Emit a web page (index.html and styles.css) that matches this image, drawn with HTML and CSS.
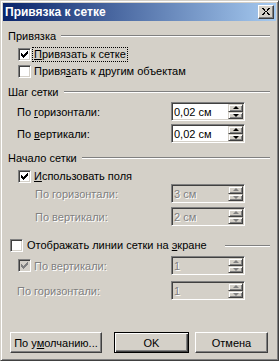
FILE: index.html
```html
<!DOCTYPE html>
<html lang="ru">

<head>
  <meta charset="UTF-8" />
  <title>Привязка к сетке</title>
  <link rel="stylesheet" href="styles.css">
</head>

<body>
  <div class="window">
    <div class="titlebar">
      <span class="title">Привязка к сетке</span>
      <div class="close">
        <svg width="8" height="7" viewBox="0 0 8 7" shape-rendering="crispEdges">
          <path d="M0 0h2v1h-2z M1 1h2v1h-2z M2 2h1v1h-1z M5 2h1v1h-1z M3 3h2v1h-2z M2 4h1v1h-1z M5 4h1v1h-1z M1 5h2v1h-2z M0 6h2v1h-2z M6 0h2v1h-2z M5 1h2v1h-2z M5 5h2v1h-2z M6 6h2v1h-2z" fill="#000" />
        </svg>
      </div>
    </div>

    <div class="content">
      <div class="group-head head-first"><span>Привязка</span><i class="rule"></i></div>

      <div class="check-row check-a indent">
        <span class="box">
          <svg class="tick" width="11" height="11" viewBox="0 0 11 11" shape-rendering="crispEdges"><path d="M2 4h1v3h-1z M3 5h1v3h-1z M4 6h1v3h-1z M5 5h1v3h-1z M6 4h1v3h-1z M7 3h1v3h-1z M8 2h1v3h-1z" /></svg>
        </span>
        <span class="focus"><u>П</u>ривязать к сетке</span>
      </div>
      <div class="check-row check-b indent">
        <span class="box"></span>
        <span class="text">Привя<u>з</u>ать к другим объектам</span>
      </div>

      <div class="group-head head-b"><span>Шаг сетки</span><i class="rule"></i></div>

      <div class="field-row row-a">
        <div class="field-label pad-small"><span>По <u>г</u>оризонтали:</span></div>
        <div class="spin-box">
          <span class="value">0,02 см</span>
          <div class="spinner">
            <div class="spin-up"><i class="arrow-up"></i></div>
            <div class="spin-down"><i class="arrow-down"></i></div>
          </div>
        </div>
      </div>
      <div class="field-row row-b">
        <div class="field-label pad-small"><span>По <u>в</u>ертикали:</span></div>
        <div class="spin-box">
          <span class="value">0,02 см</span>
          <div class="spinner">
            <div class="spin-up"><i class="arrow-up"></i></div>
            <div class="spin-down"><i class="arrow-down"></i></div>
          </div>
        </div>
      </div>

      <div class="group-head head-c"><span>Начало сетки</span><i class="rule"></i></div>

      <div class="check-row check-c indent">
        <span class="box">
          <svg class="tick" width="11" height="11" viewBox="0 0 11 11" shape-rendering="crispEdges"><path d="M2 4h1v3h-1z M3 5h1v3h-1z M4 6h1v3h-1z M5 5h1v3h-1z M6 4h1v3h-1z M7 3h1v3h-1z M8 2h1v3h-1z" /></svg>
        </span>
        <span class="text"><u>И</u>спользовать поля</span>
      </div>

      <div class="field-row row-c disabled">
        <div class="field-label pad-big"><span>По горизонтали:</span></div>
        <div class="spin-box">
          <span class="value">3 см</span>
          <div class="spinner">
            <div class="spin-up"><i class="arrow-up"></i></div>
            <div class="spin-down"><i class="arrow-down"></i></div>
          </div>
        </div>
      </div>
      <div class="field-row row-d disabled">
        <div class="field-label pad-big"><span>По вертикали:</span></div>
        <div class="spin-box">
          <span class="value">2 см</span>
          <div class="spinner">
            <div class="spin-up"><i class="arrow-up"></i></div>
            <div class="spin-down"><i class="arrow-down"></i></div>
          </div>
        </div>
      </div>

      <div class="check-row check-d">
        <span class="box"></span>
        <span class="text">Отображать линии сетки на <u>э</u>кране</span>
        <i class="rule rule-short"></i>
      </div>

      <div class="field-row row-e disabled">
        <div class="field-label check-label">
          <span class="box box-off">
            <svg class="tick" width="11" height="11" viewBox="0 0 11 11" shape-rendering="crispEdges"><path d="M2 4h1v3h-1z M3 5h1v3h-1z M4 6h1v3h-1z M5 5h1v3h-1z M6 4h1v3h-1z M7 3h1v3h-1z M8 2h1v3h-1z" /></svg>
          </span>
          <span class="text">По вертикали:</span>
        </div>
        <div class="spin-box">
          <span class="value">1</span>
          <div class="spinner">
            <div class="spin-up"><i class="arrow-up"></i></div>
            <div class="spin-down"><i class="arrow-down"></i></div>
          </div>
        </div>
      </div>
      <div class="field-row row-f disabled">
        <div class="field-label pad-small"><span>По горизонтали:</span></div>
        <div class="spin-box">
          <span class="value">1</span>
          <div class="spinner">
            <div class="spin-up"><i class="arrow-up"></i></div>
            <div class="spin-down"><i class="arrow-down"></i></div>
          </div>
        </div>
      </div>

      <div class="buttons">
        <div class="btn btn-default-settings"><span>По у<u>м</u>олчанию...</span></div>
        <div class="btn btn-ok">OK</div>
        <div class="btn btn-cancel">Отмена</div>
      </div>
    </div>
  </div>
</body>

</html>
```

FILE: styles.css
```css
:root {
  --face: #d4d0c8;
  --light: #ffffff;
  --shadow: #808080;
  --dark: #404040;
}

body {
  margin: 0;
  background: var(--face);
  font-family: 'Liberation Sans', Arial, sans-serif;
  font-size: 11px;
  color: #000;
}

u {
  text-decoration: underline;
  text-underline-offset: 1px;
}

.window {
  width: 279px;
  height: 361px;
  box-sizing: border-box;
  background: var(--face);
  border: 1px solid;
  border-color: var(--face) var(--dark) var(--dark) var(--face);
  box-shadow: inset 1px 1px var(--light), inset -1px -1px var(--shadow);
  padding: 2px;
  display: flex;
  flex-direction: column;
}

/* title bar */
.titlebar {
  height: 18px;
  display: flex;
  align-items: center;
  justify-content: space-between;
  background: linear-gradient(to right, #0a246a, #a6caf0);
  padding: 0 2px 0 2px;
}

.title {
  color: #fff;
  font-weight: bold;
  font-size: 12px;
}

.close {
  width: 16px;
  height: 14px;
  box-sizing: border-box;
  background: var(--face);
  border: 1px solid;
  border-color: var(--light) var(--dark) var(--dark) var(--light);
  box-shadow: inset -1px -1px var(--shadow);
  display: flex;
  align-items: center;
  justify-content: center;
  padding: 0 1px 1px 0;
}

.close svg {
  display: block;
}

/* body */
.content {
  flex: 1;
  display: flex;
  flex-direction: column;
  padding: 0 6px 5px 5px;
}

.group-head {
  display: flex;
  align-items: center;
  height: 14px;
}

.rule {
  flex: 1;
  height: 0;
  border-top: 1px solid var(--shadow);
  border-bottom: 1px solid var(--light);
  margin-left: 5px;
}

.rule-short {
  flex: none;
  width: 45px;
  margin-left: auto;
  margin-top: 1px;
}

.head-first { margin-top: 8px; }
.head-b { margin-top: 7px; }
.head-c { margin-top: 8px; }

.check-row {
  display: flex;
  align-items: center;
  height: 14px;
}

.indent {
  padding-left: 10px;
}

.check-a { margin-top: 4px; }
.check-b { margin-top: 3px; }
.check-c { margin-top: 4px; }
.check-d { margin-top: 12px; padding-left: 2px; }

.box {
  width: 13px;
  height: 13px;
  box-sizing: border-box;
  flex: none;
  background: #fff;
  border: 1px solid;
  border-color: var(--shadow) var(--light) var(--light) var(--shadow);
  box-shadow: inset 1px 1px var(--dark), inset -1px -1px var(--face);
  margin-right: 3px;
}

.box-off {
  background: var(--face);
}

.tick {
  display: block;
  fill: #000;
}

.box-off .tick {
  fill: var(--shadow);
}

.focus {
  outline: 1px dotted #000;
  outline-offset: 0;
  padding: 0 1px;
  margin-left: -1px;
  line-height: 13px;
}

.check-d .text {
  margin-left: 1px;
}

/* spin fields */
.field-row {
  display: flex;
  align-items: center;
  height: 19px;
}

.row-a { margin-top: 3px; }
.row-b { margin-top: 3px; }
.row-c { margin-top: 1px; }
.row-d { margin-top: 4px; }
.row-e { margin-top: 4px; }
.row-f { margin-top: 6px; }

.field-label {
  width: 163px;
  box-sizing: border-box;
  flex: none;
  display: flex;
  align-items: center;
}

.pad-small { padding-left: 9px; }
.pad-big { padding-left: 27px; }
.check-label { padding-left: 10px; }

.spin-box {
  width: 74px;
  height: 19px;
  box-sizing: border-box;
  background: #fff;
  border: 1px solid;
  border-color: var(--shadow) var(--light) var(--light) var(--shadow);
  box-shadow: inset 1px 1px var(--dark), inset -1px -1px var(--face);
  padding: 1px;
  display: flex;
  align-items: center;
}

.value {
  flex: 1;
  padding-left: 1px;
}

.spinner {
  width: 15px;
  height: 15px;
  flex: none;
  display: flex;
  flex-direction: column;
}

.spin-up,
.spin-down {
  box-sizing: border-box;
  background: var(--face);
  border: 1px solid;
  border-color: var(--face) var(--dark) var(--dark) var(--face);
  box-shadow: inset 1px 1px var(--light), inset -1px -1px var(--shadow);
  display: flex;
  align-items: center;
  justify-content: center;
}

.spin-up { height: 8px; }
.spin-down { height: 7px; }

.arrow-up,
.arrow-down {
  width: 0;
  height: 0;
  border-left: 3px solid transparent;
  border-right: 3px solid transparent;
}

.arrow-up { border-bottom: 3px solid #000; margin-bottom: 1px; }
.arrow-down { border-top: 3px solid #000; }

.disabled {
  color: var(--shadow);
  text-shadow: 1px 1px var(--light);
}

.disabled .spin-box {
  background: var(--face);
}

.disabled .arrow-up { border-bottom-color: var(--shadow); }
.disabled .arrow-down { border-top-color: var(--shadow); }

/* buttons */
.buttons {
  margin-top: auto;
  display: flex;
  padding-left: 2px;
}

.btn {
  height: 21px;
  box-sizing: border-box;
  background: var(--face);
  border: 1px solid;
  border-color: var(--light) var(--dark) var(--dark) var(--light);
  box-shadow: inset -1px -1px var(--shadow);
  display: flex;
  align-items: center;
  justify-content: center;
}

.btn-default-settings { width: 92px; }

.btn-ok {
  width: 75px;
  margin-left: 12px;
  border-color: #000;
  box-shadow: inset 1px 1px var(--light), inset -1px -1px var(--dark), inset -2px -2px var(--shadow);
}

.btn-cancel {
  width: 73px;
  margin-left: 6px;
}
```
